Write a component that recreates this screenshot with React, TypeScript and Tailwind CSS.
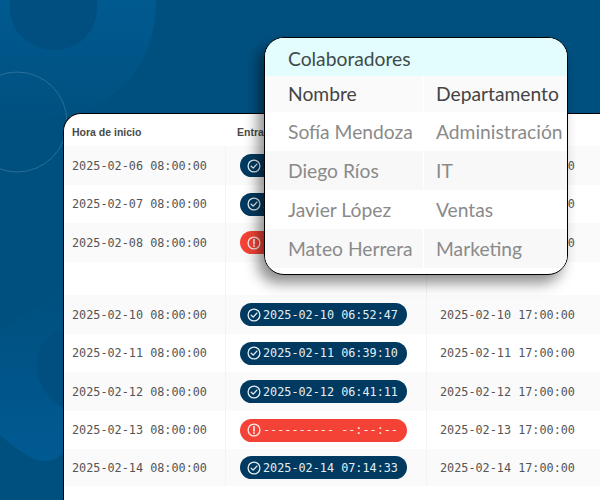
import React from 'react';

type Row = {
  start: string;
  entry?: string;
  missing?: boolean;
  end?: string;
};

const rows: Row[] = [
  { start: '2025-02-06 08:00:00', entry: '2025-02-06 06:48:12', end: '2025-02-06 17:00:00' },
  { start: '2025-02-07 08:00:00', entry: '2025-02-07 06:45:30', end: '2025-02-07 17:00:00' },
  { start: '2025-02-08 08:00:00', missing: true, end: '2025-02-08 17:00:00' },
  { start: '' },
  { start: '2025-02-10 08:00:00', entry: '2025-02-10 06:52:47', end: '2025-02-10 17:00:00' },
  { start: '2025-02-11 08:00:00', entry: '2025-02-11 06:39:10', end: '2025-02-11 17:00:00' },
  { start: '2025-02-12 08:00:00', entry: '2025-02-12 06:41:11', end: '2025-02-12 17:00:00' },
  { start: '2025-02-13 08:00:00', missing: true, end: '2025-02-13 17:00:00' },
  { start: '2025-02-14 08:00:00', entry: '2025-02-14 07:14:33', end: '2025-02-14 17:00:00' },
];

const rowHeights = ['h-[39px]', 'h-[38px]', 'h-[39px]', 'h-[33px]', 'h-[39px]', 'h-[38px]', 'h-[39px]', 'h-[38px]', 'h-[37px]'];

const people = [
  ['Sofía Mendoza', 'Administración'],
  ['Diego Ríos', 'IT'],
  ['Javier López', 'Ventas'],
  ['Mateo Herrera', 'Marketing'],
];

const CheckIcon = () => (
  <svg width="14" height="14" viewBox="0 0 14 14" fill="none" stroke="currentColor" strokeWidth="1.3" className="shrink-0">
    <circle cx="7" cy="7" r="5.9" />
    <path d="M4.2 7.2 L6.2 9.1 L9.9 5.1" strokeLinecap="round" strokeLinejoin="round" />
  </svg>
);

const AlertIcon = () => (
  <svg width="14" height="14" viewBox="0 0 14 14" fill="none" stroke="currentColor" strokeWidth="1.3" className="shrink-0">
    <circle cx="7" cy="7" r="5.9" />
    <path d="M7 3.6 V7.8" strokeWidth="1.7" strokeLinecap="round" />
    <path d="M7 9.9 V10.2" strokeWidth="1.7" strokeLinecap="round" />
  </svg>
);

const Backdrop = () => (
  <svg className="absolute inset-0" width="600" height="500" viewBox="0 0 600 500" fill="none">
    <defs>
      <linearGradient id="topGlow" x1="0" y1="0" x2="0" y2="1">
        <stop offset="0" stopColor="#005a90" />
        <stop offset="1" stopColor="#00507f" />
      </linearGradient>
      <linearGradient id="lowGlow" x1="0" y1="0" x2="0" y2="1">
        <stop offset="0" stopColor="#00507f" />
        <stop offset="1" stopColor="#005a92" />
      </linearGradient>
    </defs>
    <path d="M0 0 H156 C156 55 130 90 85 112 L0 125 Z" fill="url(#topGlow)" />
    <path d="M10 0 H97 V8 C97 32 78 50 54 50 C30 50 10 32 10 8 Z" fill="#004f80" />
    <circle cx="17" cy="122" r="50" stroke="#ffffff" strokeOpacity="0.16" />
    <path d="M0 330 L64 290 V452 C58 458 52 461 44 461 C32 461 18 450 0 435 Z" fill="url(#lowGlow)" />
    <path d="M64 329 C45 332 37 350 37 366 C37 385 50 400 64 408 Z" fill="#004f80" />
  </svg>
);

export default function App() {
  return (
    <div className="relative w-[600px] h-[500px] overflow-hidden bg-[#00507f]">
      <Backdrop />

      <div className="relative pl-[63px] pt-[113px]">
        <div className="h-[387px] bg-white border-l border-t border-black rounded-tl-[18px] font-['DejaVu_Sans_Mono',monospace] text-[11.8px] text-[#555]">
          <div className="flex h-[32px] items-center pt-[6px] font-['Liberation_Sans',sans-serif] text-[10.5px] font-bold text-[#4a4a4a]">
            <div className="w-[162px] pl-[8px]">Hora de inicio</div>
            <div className="pl-[11px]">Entrada</div>
          </div>
          {rows.map((row, i) => (
            <div key={i} className={`flex items-center ${rowHeights[i]} ${i % 2 === 0 && row.start ? 'bg-[#fafafa]' : 'bg-white'}`}>
              <div className="w-[162px] h-full flex items-center pl-[8px] pt-[2px] border-r border-[#f3f3f3]">{row.start}</div>
              <div className="w-[201px] h-full flex items-center pl-[14px] border-r border-[#f3f3f3]">
                {row.entry && (
                  <div className="flex items-center gap-[2px] w-[167px] h-[23px] pl-[7px] rounded-full bg-[#003a60] text-[#e4edf3]">
                    <CheckIcon />
                    <span className="pt-[2px]">{row.entry}</span>
                  </div>
                )}
                {row.missing && (
                  <div className="flex items-center gap-[2px] w-[167px] h-[23px] pl-[7px] rounded-full bg-[#f44336] text-[#fdeceb]">
                    <AlertIcon />
                    <span className="pt-[2px]">---------- --:--:--</span>
                  </div>
                )}
              </div>
              <div className="pl-[13px] pt-[2px] whitespace-nowrap">{row.end}</div>
            </div>
          ))}
        </div>
      </div>

      <div className="absolute left-[264px] top-[37px] w-[304px] h-[238px] overflow-hidden bg-white border border-black rounded-[20px] shadow-[-6px_8px_14px_rgba(0,0,0,0.45)] font-['Lato',sans-serif] text-[19.25px] leading-[24px]">
        <div className="h-[38px] flex items-center pl-[23px] pt-[3px] bg-[#e3fdfd] text-[#3f4a4a]">Colaboradores</div>
        <div className="flex h-[36px] bg-[#fafafa] text-[#444]">
          <div className="w-[159px] h-full flex items-center pl-[23px] border-r border-white">Nombre</div>
          <div className="flex items-center pl-[12px]">Departamento</div>
        </div>
        {people.map(([name, dept], i) => (
          <div key={name} className={`flex h-[39px] text-[#8a8a8a] ${i % 2 === 1 ? 'bg-[#f8f8f8]' : 'bg-white'}`}>
            <div className="w-[159px] h-full flex items-center pl-[23px] border-r border-white whitespace-nowrap">{name}</div>
            <div className="flex items-center pl-[12px] whitespace-nowrap">{dept}</div>
          </div>
        ))}
      </div>
    </div>
  );
}
